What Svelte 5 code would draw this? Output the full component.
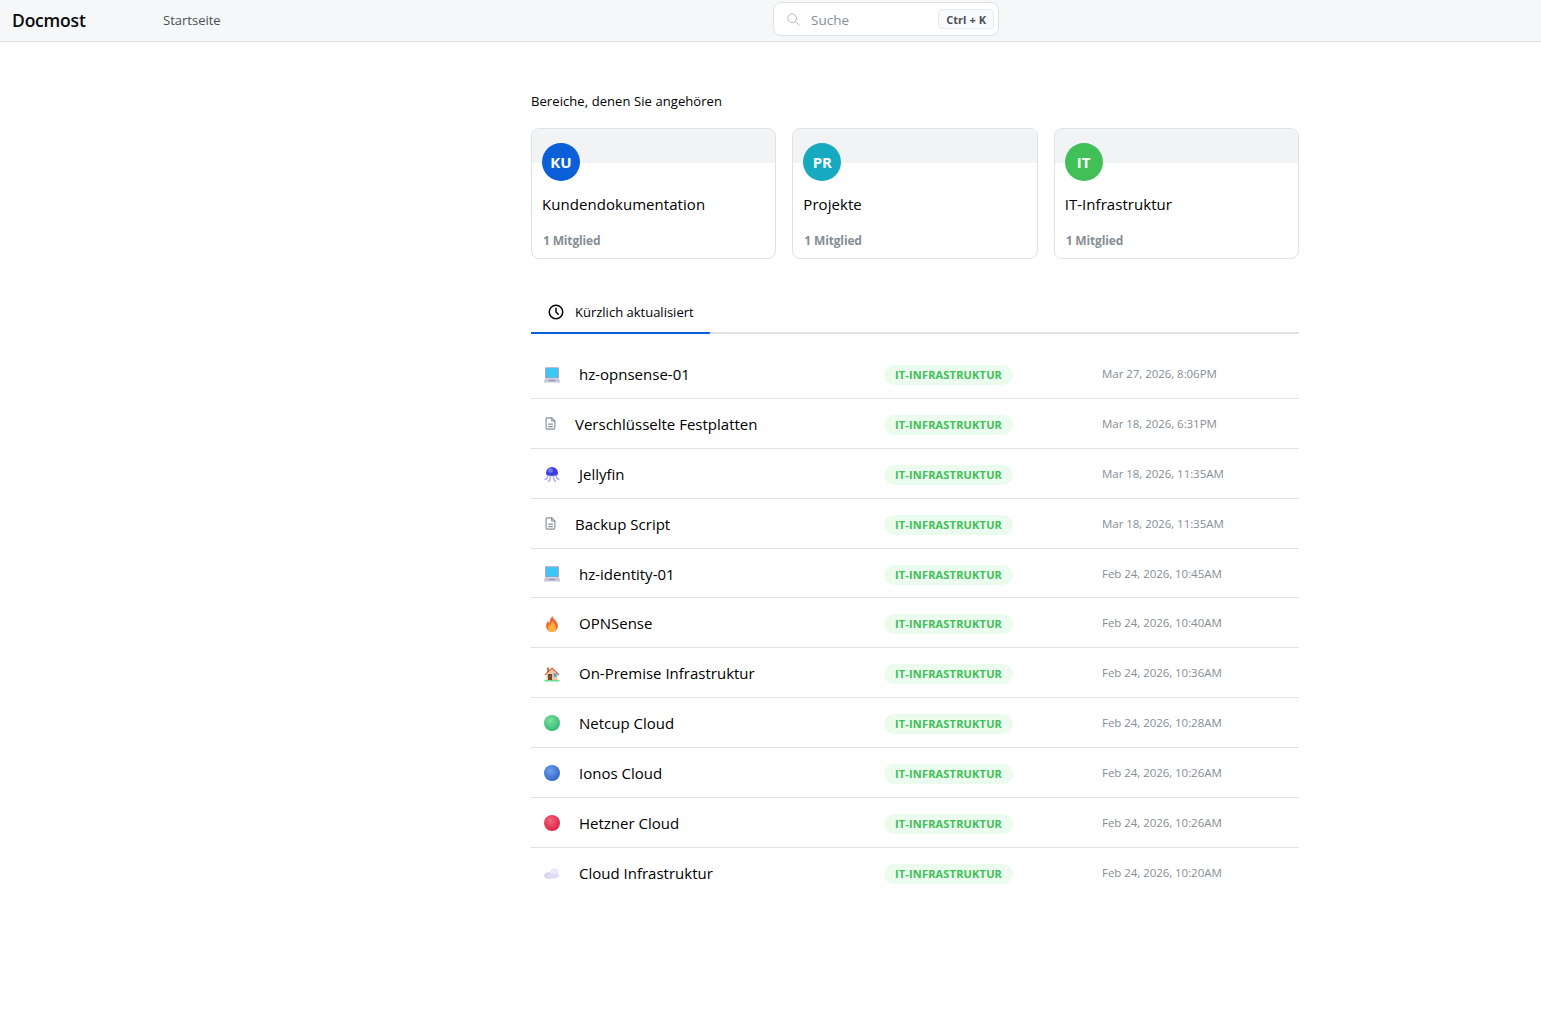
<script>
  const spaces = [
    { ab: 'KU', name: 'Kundendokumentation', color: '#0b5fd8' },
    { ab: 'PR', name: 'Projekte', color: '#15aabf' },
    { ab: 'IT', name: 'IT-Infrastruktur', color: '#40c057' }
  ];
  const rows = [
    { i: 'laptop', t: 'hz-opnsense-01', d: 'Mar 27, 2026, 8:06PM' },
    { i: 'doc', t: 'Verschlüsselte Festplatten', d: 'Mar 18, 2026, 6:31PM' },
    { i: 'jelly', t: 'Jellyfin', d: 'Mar 18, 2026, 11:35AM' },
    { i: 'doc', t: 'Backup Script', d: 'Mar 18, 2026, 11:35AM' },
    { i: 'laptop', t: 'hz-identity-01', d: 'Feb 24, 2026, 10:45AM' },
    { i: 'fire', t: 'OPNSense', d: 'Feb 24, 2026, 10:40AM' },
    { i: 'house', t: 'On-Premise Infrastruktur', d: 'Feb 24, 2026, 10:36AM' },
    { i: 'green', t: 'Netcup Cloud', d: 'Feb 24, 2026, 10:28AM' },
    { i: 'blue', t: 'Ionos Cloud', d: 'Feb 24, 2026, 10:26AM' },
    { i: 'red', t: 'Hetzner Cloud', d: 'Feb 24, 2026, 10:26AM' },
    { i: 'cloud', t: 'Cloud Infrastruktur', d: 'Feb 24, 2026, 10:20AM' }
  ];
  const balls = { green: ['#7ee0a0', '#2fb673'], blue: ['#6ea2ea', '#2f62c8'], red: ['#f4677c', '#d81f45'] };
</script>

<header class="top">
  <div class="brand">Docmost</div>
  <nav class="nav">Startseite</nav>
  <div class="search">
    <svg class="sicon" viewBox="0 0 24 24" width="15" height="15" fill="none" stroke="#adb5bd" stroke-width="1.5" stroke-linecap="round"><circle cx="10" cy="10" r="7"/><path d="M21 21l-6-6"/></svg>
    <span class="ph">Suche</span>
    <span class="kbd">Ctrl + K</span>
  </div>
</header>

<main class="page">
  <h2 class="heading">Bereiche, denen Sie angehören</h2>
  <div class="cards">
    {#each spaces as s}
      <div class="card">
        <div class="banner"></div>
        <div class="avatar" style="background:{s.color}">{s.ab}</div>
        <div class="cname">{s.name}</div>
        <div class="members">1 Mitglied</div>
      </div>
    {/each}
  </div>

  <div class="tabs">
    <div class="tab">
      <svg viewBox="0 0 24 24" width="18" height="18" fill="none" stroke="#000" stroke-width="2" stroke-linecap="round" stroke-linejoin="round"><circle cx="12" cy="12" r="9"/><path d="M12 7v5l3 3"/></svg>
      <span>Kürzlich aktualisiert</span>
    </div>
  </div>

  <div class="list">
    {#each rows as r}
      <div class="row">
        <div class="title">
          {#if r.i === 'doc'}
            <svg class="ic doc" viewBox="0 0 24 24" width="15" height="15" fill="none" stroke="#868e96" stroke-width="1.8" stroke-linecap="round" stroke-linejoin="round"><path d="M14 3v4a1 1 0 0 0 1 1h4"/><path d="M17 21H7a2 2 0 0 1-2-2V5a2 2 0 0 1 2-2h7l5 5v11a2 2 0 0 1-2 2z"/><path d="M9 13h6M9 17h6"/></svg>
          {:else}
            <svg class="ic emoji" viewBox="0 0 16 16" width="16" height="16">
              <defs>
                <radialGradient id="g-{r.t.length}" cx="40%" cy="35%" r="70%">
                  <stop offset="0" stop-color={balls[r.i]?.[0] ?? '#fff'} />
                  <stop offset="1" stop-color={balls[r.i]?.[1] ?? '#fff'} />
                </radialGradient>
              </defs>
              {#if r.i === 'laptop'}
                <rect x="1" y="0.2" width="14" height="11.300" rx="1" fill="#a9a6c8"/>
                <rect x="2" y="1.200" width="12" height="9.300" fill="#3cc6f4"/>
                <path d="M1 11.500h14l1 3.300a.6.6 0 0 1-.6.700H.6a.6.6 0 0 1-.6-.700z" fill="#c9c5d8"/>
                <rect x="5" y="13" width="6" height="1" fill="#918ea8"/>
              {:else if r.i === 'jelly'}
                <path d="M2 7a6 6 0 0 1 12 0c0 2.200-1.800 3-6 3S2 9.200 2 7z" fill="#3f3fd8"/>
                <ellipse cx="6.500" cy="4.500" rx="2.500" ry="2.200" fill="#6f7cf0"/>
                <path d="M3.500 9.500c.3 2.800-1.200 4-2.500 3.500M6.500 10c0 2.500-.3 4.200-1.800 5.500M9.500 10c0 2.500.3 4.200 1.800 5.500M12.500 9.500c-.3 2.800 1.200 4 2.500 3.500" fill="none" stroke="#a9a6ec" stroke-width="1.400" stroke-linecap="round"/>
              {:else if r.i === 'fire'}
                <path d="M8.500 0c.3 3 5.500 5 5.500 10a6 6 0 0 1-12 0c0-2.200 1-4 2-5 .2 1 .6 1.800 1.300 2C5.500 4.500 6.800 1.800 8.500 0z" fill="#ee6b35"/>
                <path d="M8.700 5.500c.3 1.800 3.300 3.300 3.300 6.500a4 4 0 0 1-8 0c0-1.800 1-2.800 1.800-3.500.2.700.5 1 1 1.200C6.800 8 7.700 6.500 8.700 5.500z" fill="#fbb03b"/>
              {:else if r.i === 'house'}
                <rect x="3" y="1.500" width="2.200" height="5" fill="#c77c4a"/>
                <rect x="2.500" y="7" width="11" height="7" fill="#e9c9a0"/>
                <path d="M8 1.500L.5 8.500l1 .8L8 3.500l6.500 5.800 1-.8z" fill="#e0463c"/>
                <path d="M8 3L2.500 8v1h11V8z" fill="#e9c9a0"/>
                <rect x="4" y="8" width="4" height="6" fill="#7a4a30"/>
                <rect x="9.500" y="7.500" width="3.300" height="3.300" fill="#4aa8e0"/>
                <rect x="0.500" y="14" width="15" height="1.500" fill="#66e08a"/>
              {:else if r.i === 'cloud'}
                <ellipse cx="5" cy="10.500" rx="5" ry="3.300" fill="#d5d2f2"/>
                <circle cx="10.500" cy="8" r="4.500" fill="#e9e7fa"/>
                <ellipse cx="9" cy="11" rx="6" ry="2.500" fill="#e0def6"/>
              {:else}
                <circle cx="8" cy="8" r="8" fill="url(#g-{r.t.length})"/>
              {/if}
            </svg>
          {/if}
          <span class="ttext">{r.t}</span>
        </div>
        <div class="badgecell"><span class="badge">IT-INFRASTRUKTUR</span></div>
        <div class="date">{r.d}</div>
      </div>
    {/each}
  </div>
</main>

<style>
  :global(body) {
    margin: 0;
    background: #fff;
    color: #000;
    font-family: "Open Sans", "Noto Sans", sans-serif;
  }
  .top {
    height: 41px;
    background: #f6f7f9;
    border-bottom: 1px solid #dee2e6;
    display: flex;
    align-items: center;
    position: relative;
  }
  .brand {
    margin-left: 12px;
    width: 151px;
    font-size: 17.500px;
    font-weight: 600;
    color: #0b0b0b;
    letter-spacing: -0.2px;
    padding-bottom: 2px;
  }
  .nav {
    font-size: 13px;
    color: #495057;
    padding-bottom: 2px;
  }
  .search {
    position: absolute;
    left: 773px;
    top: 2px;
    width: 226px;
    height: 34px;
    box-sizing: border-box;
    background: #fff;
    border: 1px solid #dee2e6;
    border-radius: 8px;
    display: flex;
    align-items: center;
    padding: 0 4px 0 12px;
  }
  .ph {
    margin-left: 10px;
    font-size: 13.500px;
    line-height: 20px;
    padding-top: 2px;
    color: #868e96;
    flex: 1;
  }
  .kbd {
    font-size: 11px;
    font-weight: 700;
    color: #495057;
    background: #f8f9fa;
    border: 1px solid #e9ecef;
    border-radius: 4px;
    padding: 0 7px;
    height: 20px;
    line-height: 19px;
    box-sizing: border-box;
    letter-spacing: 0.05px;
  }
  .page {
    width: 768px;
    margin-left: 531px;
    padding-top: 50px;
  }
  .heading {
    margin: 0;
    font-size: 13px;
    font-weight: 400;
    line-height: 18px;
    letter-spacing: 0.08px;
  }
  .cards {
    margin-top: 18px;
    display: grid;
    grid-template-columns: repeat(3, 1fr);
    gap: 16px;
  }
  .card {
    height: 131px;
    box-sizing: border-box;
    border: 1px solid #dee2e6;
    border-radius: 8px;
    overflow: hidden;
    position: relative;
    padding: 0 10px;
  }
  .banner {
    height: 34px;
    margin: 0 -10px;
    background: #f1f3f5;
  }
  .avatar {
    width: 38px;
    height: 38px;
    border-radius: 50%;
    margin-top: -20px;
    color: #fff;
    font-weight: 700;
    font-size: 15px;
    display: flex;
    align-items: center;
    justify-content: center;
  }
  .cname {
    margin-top: 12px;
    font-size: 15px;
    line-height: 22px;
    letter-spacing: 0.05px;
  }
  .members {
    margin-top: 18px;
    margin-left: 1px;
    font-size: 12px;
    font-weight: 700;
    line-height: 16px;
    color: #868e96;
    letter-spacing: -0.15px;
  }
  .tabs {
    margin-top: 36px;
    border-bottom: 2px solid #dee2e6;
    height: 37px;
  }
  .tab {
    width: 179px;
    height: 39px;
    box-sizing: border-box;
    border-bottom: 2px solid #0b5fd8;
    display: flex;
    align-items: center;
    gap: 10px;
    padding: 0 0 4px 16px;
    font-size: 13px;
  }
  .list {
    margin-top: 15.400px;
  }
  .row {
    height: 49.820px;
    box-sizing: border-box;
    border-bottom: 1px solid #dee2e6;
    display: flex;
    align-items: center;
  }
  .row:last-child {
    border-bottom: none;
  }
  .title {
    width: 353px;
    padding-left: 13px;
    box-sizing: border-box;
    display: flex;
    align-items: center;
  }
  .ic {
    flex: none;
  }
  .emoji { margin-right: 19px; margin-top: 2px; }
  .doc { margin-right: 17px; margin-left: -1px; }
  .ttext {
    font-size: 15px;
    line-height: 22px;
    padding-top: 1px;
    color: #000;
  }
  .badgecell {
    width: 218px;
  }
  .badge {
    display: inline-block;
    height: 20px;
    line-height: 20px;
    width: 129px;
    box-sizing: border-box;
    text-align: center;
    border-radius: 10px;
    background: #ebfbee;
    color: #40c057;
    font-size: 11px;
    letter-spacing: 0.18px;
    font-weight: 700;
    white-space: nowrap;
  }
  .date {
    font-size: 11.500px;
    line-height: 16px;
    padding-top: 1px;
    color: #868e96;
    letter-spacing: -0.05px;
  }
</style>
